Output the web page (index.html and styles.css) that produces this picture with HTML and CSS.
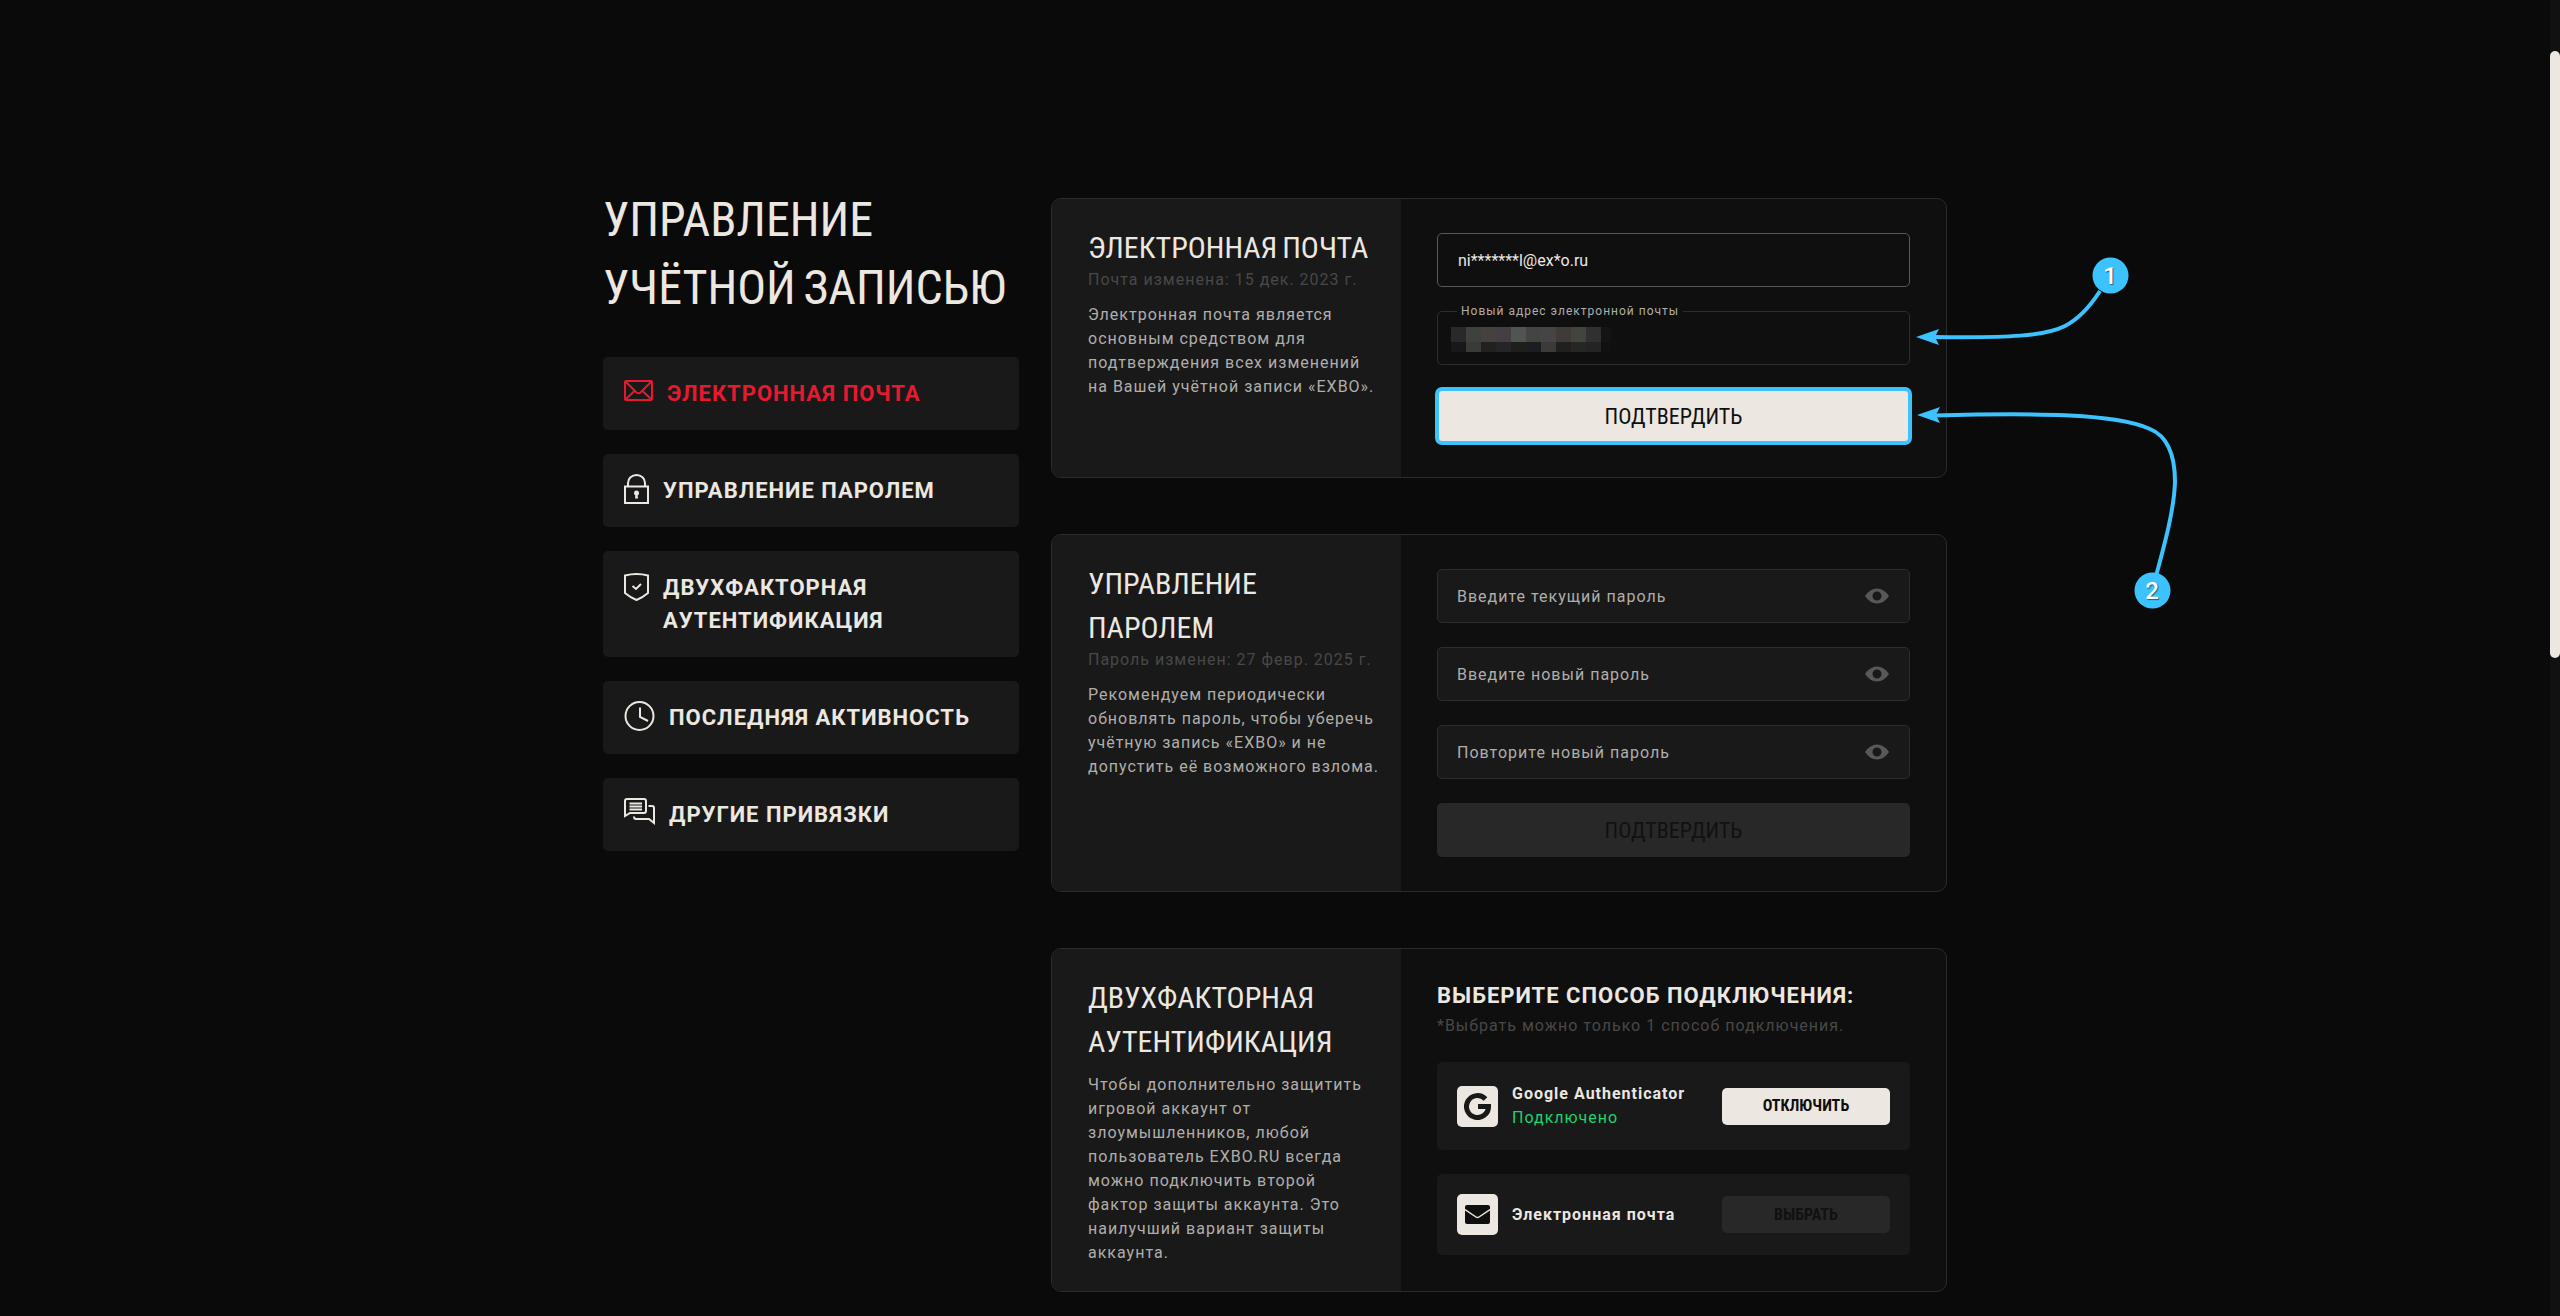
FILE: index.html
```html
<!DOCTYPE html>
<html lang="ru">
<head>
<meta charset="utf-8">
<meta name="viewport" content="width=device-width, initial-scale=1">
<title>Управление учётной записью</title>
<link rel="stylesheet" href="styles.css">
</head>
<body>
<div class="page">
  <aside class="sidebar">
    <h1 class="page-title">Управление учётной записью</h1>
    <nav class="menu">
      <a class="menu-link menu-link-active" href="#email">
        <svg class="menu-icon" width="29" height="30" viewBox="0 0 29 30"><rect x="1" y="4" width="27" height="19" rx="1"/><path d="M2 5l10.500 10.500q2 1.500 4 0L27 5M2 22l8.500-8M27 22l-8.500-8"/></svg>
        <span>Электронная почта</span>
      </a>
      <a class="menu-link" href="#password">
        <svg class="menu-icon" width="25" height="30" viewBox="0 0 25 30"><rect x="1" y="12.500" width="23" height="16.500"/><path d="M4 12V9a8.500 8 0 0 1 17 0v3"/><circle class="icon-solid" cx="12.500" cy="19" r="2.500"/><path class="icon-solid" d="M11.500 20h2l.5 4.500h-3z"/></svg>
        <span>Управление паролем</span>
      </a>
      <a class="menu-link" href="#two-factor">
        <svg class="menu-icon" width="25" height="32" viewBox="0 0 25 32"><path d="M1 4.500Q12.500 1.500 24 4.500V22q-6 5-11.500 7Q7 27 1 22z"/><path d="M8.500 15l3.500 3 5-5"/></svg>
        <span>Двухфакторная аутентификация</span>
      </a>
      <a class="menu-link" href="#activity">
        <svg class="menu-icon" width="31" height="30" viewBox="0 0 31 30"><circle cx="15.500" cy="15" r="14"/><path d="M16 6.500v9.500l8 4"/></svg>
        <span>Последняя активность</span>
      </a>
      <a class="menu-link" href="#links">
        <svg class="menu-icon" width="31" height="30" viewBox="0 0 31 30"><path d="M1 18V3q0-2 2-2h17q2 0 2 2v10q0 2-2 2H6z"/><path d="M5.500 5.500h12.500M5.500 8.500h12.500M5.500 11.500h12.500M24.500 8H28q2 0 2 2v15l-5-4H12q-2 0-2-2.500"/></svg>
        <span>Другие привязки</span>
      </a>
    </nav>
  </aside>

  <main class="cards">
    <section class="card" id="email">
      <div class="card-about">
        <h2 class="card-title">Электронная почта</h2>
        <p class="card-date">Почта изменена: 15 дек. 2023 г.</p>
        <p class="card-text">Электронная почта является основным средством для подтверждения всех изменений на Вашей учётной записи «EXBO».</p>
      </div>
      <form class="card-form">
        <input class="field field-current" type="text" value="ni*******l@ex*o.ru" aria-label="Текущий адрес электронной почты" readonly>
        <div class="field-wrap">
          <input class="field field-new" id="new-email" type="email">
          <label class="field-label" for="new-email">Новый адрес электронной почты</label>
          <svg class="mosaic" width="160" height="25" viewBox="0 0 160 25" shape-rendering="crispEdges">
            <path fill="#29292b" d="M0 0h15v15H0z"/><path fill="#3d423f" d="M15 0h15v15H15z"/><path fill="#45413d" d="M30 0h15v15H30z"/><path fill="#443f43" d="M45 0h15v15H45z"/><path fill="#505453" d="M60 0h15v15H60z"/><path fill="#444543" d="M75 0h15v15H75z"/><path fill="#464446" d="M90 0h15v15H90z"/><path fill="#403b38" d="M105 0h15v15h-15z"/><path fill="#41453c" d="M120 0h15v15h-15z"/><path fill="#2e3032" d="M135 0h15v15h-15z"/><path fill="#141414" d="M150 0h10v15h-10z"/>
            <path fill="#181818" d="M0 15h15v10H0z"/><path fill="#3a3b39" d="M15 15h15v10H15z"/><path fill="#22211f" d="M30 15h15v10H30z"/><path fill="#252426" d="M45 15h15v10H45z"/><path fill="#1e1f1d" d="M60 15h15v10H60z"/><path fill="#1b1d20" d="M75 15h15v10H75z"/><path fill="#3d3b39" d="M90 15h15v10H90z"/><path fill="#20201f" d="M105 15h15v10h-15z"/><path fill="#242724" d="M120 15h15v10h-15z"/><path fill="#232423" d="M135 15h15v10h-15z"/><path fill="#11110f" d="M150 15h10v10h-10z"/>
          </svg>
        </div>
        <button class="submit submit-marked" type="button">Подтвердить</button>
      </form>
      <svg class="callouts" width="280" height="370" viewBox="0 0 280 370" aria-hidden="true">
        <path class="callout-line" d="M24 87C100 88 135 86 155 76Q174 66 190 41"/>
        <path class="callout-head" d="M6 87l23-8-4 8 4 8z"/>
        <path class="callout-line" d="M24 165.500C120 163 205 163 240 179C262 188 265 215 265 232C264 260 255 293 246 326"/>
        <path class="callout-head" d="M7 165l23-8-4 8 4 8z"/>
        <circle class="callout-dot" cx="200.500" cy="25.500" r="18"/>
        <circle class="callout-dot" cx="242.500" cy="340.500" r="18"/>
        <text class="callout-number" x="200" y="34">1</text>
        <text class="callout-number" x="242" y="349">2</text>
      </svg>
    </section>

    <section class="card" id="password">
      <div class="card-about">
        <h2 class="card-title">Управление паролем</h2>
        <p class="card-date">Пароль изменен: 27 февр. 2025 г.</p>
        <p class="card-text">Рекомендуем периодически обновлять пароль, чтобы уберечь учётную запись «EXBO» и не допустить её возможного взлома.</p>
      </div>
      <form class="card-form">
        <div class="field-wrap">
          <input class="field" type="password" placeholder="Введите текущий пароль" aria-label="Введите текущий пароль">
          <button class="reveal" type="button" aria-label="Показать пароль"><svg width="24" height="16" viewBox="0 0 24 16"><path fill="#585858" fill-rule="evenodd" d="M0 8Q5 .5 12 .5T24 8Q19 15.500 12 15.500T0 8zM12 3.500a4.500 4.500 0 1 0 0 9a4.500 4.500 0 1 0 0-9z"/></svg></button>
        </div>
        <div class="field-wrap">
          <input class="field" type="password" placeholder="Введите новый пароль" aria-label="Введите новый пароль">
          <button class="reveal" type="button" aria-label="Показать пароль"><svg width="24" height="16" viewBox="0 0 24 16"><path fill="#585858" fill-rule="evenodd" d="M0 8Q5 .5 12 .5T24 8Q19 15.500 12 15.500T0 8zM12 3.500a4.500 4.500 0 1 0 0 9a4.500 4.500 0 1 0 0-9z"/></svg></button>
        </div>
        <div class="field-wrap">
          <input class="field" type="password" placeholder="Повторите новый пароль" aria-label="Повторите новый пароль">
          <button class="reveal" type="button" aria-label="Показать пароль"><svg width="24" height="16" viewBox="0 0 24 16"><path fill="#585858" fill-rule="evenodd" d="M0 8Q5 .5 12 .5T24 8Q19 15.500 12 15.500T0 8zM12 3.500a4.500 4.500 0 1 0 0 9a4.500 4.500 0 1 0 0-9z"/></svg></button>
        </div>
        <button class="submit" type="button" disabled>Подтвердить</button>
      </form>
    </section>

    <section class="card" id="two-factor">
      <div class="card-about">
        <h2 class="card-title">Двухфакторная аутентификация</h2>
        <p class="card-text">Чтобы дополнительно защитить игровой аккаунт от злоумышленников, любой пользователь EXBO.RU всегда можно подключить второй фактор защиты аккаунта. Это наилучший вариант защиты аккаунта.</p>
      </div>
      <div class="card-form">
        <header class="methods-head">
          <h3 class="methods-title">Выберите способ подключения:</h3>
          <p class="methods-note">*Выбрать можно только 1 способ подключения.</p>
        </header>
        <div class="method">
          <span class="method-icon"><svg width="27" height="27" viewBox="0 0 27 27"><path fill="none" stroke="#191919" stroke-width="5" d="M21.500 6A11 11 0 1 0 24.500 13.500H14"/></svg></span>
          <div class="method-info">
            <strong class="method-name">Google Authenticator</strong>
            <span class="method-state">Подключено</span>
          </div>
          <button class="method-button" type="button">Отключить</button>
        </div>
        <div class="method">
          <span class="method-icon"><svg width="25" height="19" viewBox="0 0 25 19"><rect width="25" height="19" rx="2" fill="#0f0f0f"/><path fill="none" stroke="#ece7e0" stroke-width="1.500" d="M0 4.500l11 7.500q1.500 1 3 0L25 4.500"/></svg></span>
          <div class="method-info">
            <strong class="method-name">Электронная почта</strong>
          </div>
          <button class="method-button" type="button" disabled>Выбрать</button>
        </div>
      </div>
    </section>
  </main>
</div>
<div class="scroll-track"><div class="scroll-thumb"></div></div>
</body>
</html>
```
FILE: styles.css
```css
* {
  box-sizing: border-box;
}

body {
  margin: 0;
  padding-right: 10px;
  background: #0a0a0a;
  color: #ece7e0;
  font: 16px/24px Roboto, sans-serif;
  letter-spacing: 1px;
}

h1, h2, h3, p {
  margin: 0;
}

input, button {
  margin: 0;
  font-family: inherit;
}

.page {
  display: flex;
  gap: 32px;
  max-width: 1344px;
  margin: 0 auto;
  padding: 188px 0 24px;
}

.sidebar {
  flex: none;
  width: 416px;
}

.page-title {
  margin-bottom: 33px;
  font: 400 48px/68px "Bebas Neue", "Roboto Condensed", "Liberation Sans Narrow", sans-serif;
  letter-spacing: 0;
  text-transform: uppercase;
}

.menu {
  display: flex;
  flex-direction: column;
  gap: 24px;
}

.menu-link {
  display: flex;
  align-items: flex-start;
  gap: 14px;
  padding: 20px 21px;
  border-radius: 5px;
  background: #191919;
  color: #ece7e0;
  font-size: 22px;
  font-weight: 700;
  line-height: 33px;
  text-decoration: none;
  text-transform: uppercase;
}

.menu-link-active {
  color: #e8192f;
}

.menu-icon {
  flex: none;
  fill: none;
  stroke: currentColor;
  stroke-width: 2;
}

.icon-solid {
  fill: currentColor;
  stroke: none;
}

.cards {
  display: flex;
  flex: 1;
  flex-direction: column;
  gap: 56px;
  padding-top: 10px;
}

.card {
  position: relative;
  display: grid;
  grid-template-columns: 349px 1fr;
  border: 1px solid #2b2b2b;
  border-radius: 10px;
  background: #0f0f0f;
}

.card-about {
  padding: 28px 20px 26px 36px;
  border-radius: 9px 0 0 9px;
  background: #191919;
}

.card-title {
  margin-bottom: -3px;
  font: 400 30px/44px "Bebas Neue", "Roboto Condensed", "Liberation Sans Narrow", sans-serif;
  letter-spacing: 0;
  text-transform: uppercase;
}

.card-date,
.methods-note {
  color: #484848;
}

.card-text {
  margin-top: 11px;
  color: #b0aeab;
}

.card-form {
  display: flex;
  flex-direction: column;
  gap: 24px;
  padding: 34px 36px;
}

.field-wrap {
  position: relative;
}

.field {
  display: block;
  width: 100%;
  height: 54px;
  padding: 0 19px;
  border: 1px solid #2d2d2d;
  border-radius: 5px;
  background: #191919;
  color: #ece7e0;
  font-size: 16px;
  letter-spacing: 1px;
}

.field::placeholder {
  color: #b0aeab;
  opacity: 1;
}

.field-current {
  padding: 0 20px;
  border-color: #585858;
  background: #0f0f0f;
  letter-spacing: 0;
}

.field-new {
  background: #0f0f0f;
}

.field-label {
  position: absolute;
  top: -8px;
  left: 20px;
  padding: 0 4px;
  background: #0f0f0f;
  color: #b0aeab;
  font-size: 12px;
  line-height: 16px;
}

.mosaic {
  position: absolute;
  top: 16px;
  left: 14px;
}

.reveal {
  position: absolute;
  top: 19px;
  right: 21px;
  display: flex;
  padding: 0;
  border: 0;
  background: none;
}

.submit,
.method-button {
  border: 0;
  border-radius: 5px;
  background: #ece7e0;
  color: #0f0f0f;
  font-family: "Bebas Neue", "Roboto Condensed", "Liberation Sans Narrow", sans-serif;
  letter-spacing: 0;
  text-transform: uppercase;
}

.submit {
  height: 54px;
  padding-top: 4px;
  font-size: 22px;
}

.submit-marked {
  outline: 4px solid #3cc3ff;
  outline-offset: -2px;
}

.submit:disabled,
.method-button:disabled {
  background: #282828;
  color: #111;
}

.callouts {
  position: absolute;
  top: 51px;
  left: calc(100% - 36px);
}

.callout-line {
  fill: none;
  stroke: #3cc3ff;
  stroke-width: 4;
}

.callout-head,
.callout-dot {
  fill: #3cc3ff;
}

.callout-number {
  fill: #fff;
  font: 500 24px Roboto, sans-serif;
  letter-spacing: 0;
  text-anchor: middle;
  text-shadow: 1px 1px 1px #1c5f80;
}

.methods-head {
  display: grid;
  gap: 5px;
}

.methods-title {
  font-size: 22px;
  font-weight: 700;
  line-height: 26px;
  text-transform: uppercase;
}

.method {
  display: flex;
  align-items: center;
  gap: 14px;
  padding: 20px;
  border-radius: 5px;
  background: #191919;
}

.method-icon {
  display: flex;
  flex: none;
  align-items: center;
  justify-content: center;
  width: 41px;
  height: 41px;
  border-radius: 5px;
  background: #ece7e0;
}

.method-info {
  display: flex;
  flex: 1;
  flex-direction: column;
}

.method-state {
  color: #19d46f;
}

.method-button {
  width: 168px;
  height: 37px;
  font-size: 16px;
  font-weight: 700;
}

.scroll-track {
  position: fixed;
  top: 0;
  right: 0;
  bottom: 0;
  width: 10px;
  padding-top: 51px;
  background: #111;
}

.scroll-thumb {
  height: 48%;
  border-radius: 5px;
  background: #ece7e0;
}
```
